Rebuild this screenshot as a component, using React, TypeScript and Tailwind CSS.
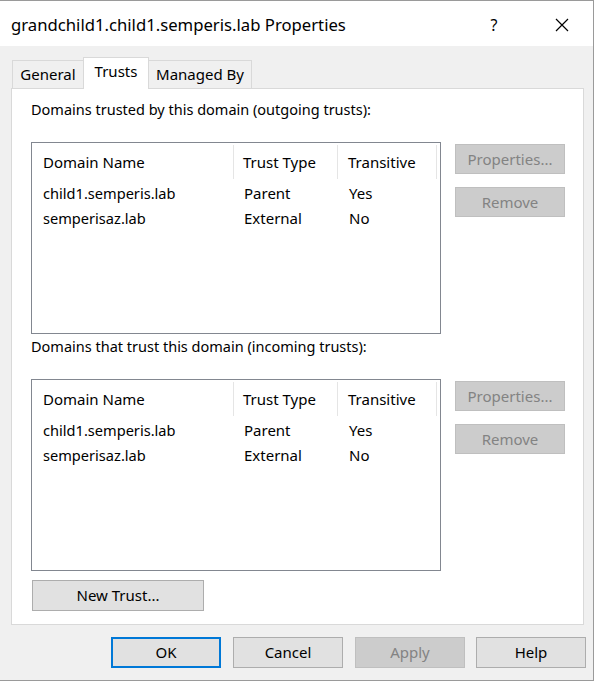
import React from 'react';

const rows = [
  { name: 'child1.semperis.lab', type: 'Parent', transitive: 'Yes' },
  { name: 'semperisaz.lab', type: 'External', transitive: 'No' },
];

const TrustList: React.FC = () => (
  <div className="w-[410px] h-[192px] bg-white border border-[#828790] shrink-0">
    <div className="flex h-[38px] items-center">
      <div className="w-[202px] h-[34px] pl-[11px] flex items-center border-r border-[#e5e5e5]">Domain Name</div>
      <div className="w-[104px] h-[34px] pl-[9px] flex items-center border-r border-[#e5e5e5]">Trust Type</div>
      <div className="w-[99px] h-[34px] pl-[10px] flex items-center border-r border-[#e5e5e5]">Transitive</div>
    </div>
    {rows.map((r) => (
      <div key={r.name} className="flex h-[25px] items-center">
        <div className="w-[202px] pl-[11px] text-[14.6px]">{r.name}</div>
        <div className="w-[104px] pl-[10px]">{r.type}</div>
        <div className="w-[99px] pl-[11px]">{r.transitive}</div>
      </div>
    ))}
  </div>
);

const SideButtons: React.FC = () => (
  <div className="flex flex-col gap-[13px] pt-[2px] ml-[14px]">
    <button className="w-[110px] h-[30px] bg-[#cccccc] border border-[#bfbfbf] text-[#838383]">Properties...</button>
    <button className="w-[110px] h-[30px] bg-[#cccccc] border border-[#bfbfbf] text-[#838383]">Remove</button>
  </div>
);

const App: React.FC = () => {
  return (
    <div
      className="w-[594px] h-[681px] bg-[#f0f0f0] border-t border-r border-b border-[#9a9a9a] text-[15px] text-black overflow-hidden"
      style={{ fontFamily: '"Segoe UI", "Noto Sans", sans-serif' }}
    >
      {/* title bar */}
      <div className="h-[45px] bg-white flex items-center pl-[11px] pr-[22px] pt-[2px]">
        <div className="flex-1 text-[16.7px]">grandchild1.child1.semperis.lab Properties</div>
        <div className="w-[20px] text-center mr-[51px] text-[16px]">?</div>
        <svg width="14" height="14" viewBox="0 0 14 14" className="mr-[2px]">
          <path d="M1 1 L13 13 M13 1 L1 13" stroke="#000" strokeWidth="1.2" />
        </svg>
      </div>

      <div className="pl-[11px] pt-[11px]">
        {/* tabs */}
        <div className="flex items-end h-[31px] pl-[1px] relative z-10">
          <div className="w-[72px] h-[28px] border border-b-0 border-[#d9d9d9] bg-[#f0f0f0] flex items-center justify-center">General</div>
          <div className="w-[66px] h-[32px] -mb-[1px] border border-b-0 border-[#d9d9d9] bg-white flex items-start pt-[2px] justify-center -ml-[1px]">Trusts</div>
          <div className="w-[104px] h-[28px] border border-b-0 border-[#d9d9d9] bg-[#f0f0f0] flex items-center justify-center -ml-[1px]">Managed By</div>
        </div>

        {/* panel */}
        <div className="w-[573px] h-[537px] bg-white border border-[#d9d9d9] pl-[19px] flex flex-col">
          <div className="h-[20px] mt-[10px] leading-[20px] text-[14.5px]">Domains trusted by this domain (outgoing trusts):</div>
          <div className="flex mt-[23px]">
            <TrustList />
            <SideButtons />
          </div>
          <div className="h-[20px] mt-[2px] leading-[20px] text-[14.5px]">Domains that trust this domain (incoming trusts):</div>
          <div className="flex mt-[23px]">
            <TrustList />
            <SideButtons />
          </div>
          <button className="mt-[9px] ml-[1px] w-[172px] h-[31px] bg-[#e1e1e1] border border-[#adadad]">New Trust...</button>
        </div>

        {/* bottom buttons */}
        <div className="flex gap-[12px] mt-[12px] pl-[100px]">
          <button className="w-[110px] h-[31px] bg-[#e1e1e1] border-2 border-[#0078d7]">OK</button>
          <button className="w-[110px] h-[31px] bg-[#e1e1e1] border border-[#adadad]">Cancel</button>
          <button className="w-[110px] h-[31px] bg-[#cccccc] border border-[#bfbfbf] text-[#838383]">Apply</button>
          <button className="w-[110px] h-[31px] bg-[#e1e1e1] border border-[#adadad] -ml-[1px]">Help</button>
        </div>
      </div>
    </div>
  );
};

export default App;
